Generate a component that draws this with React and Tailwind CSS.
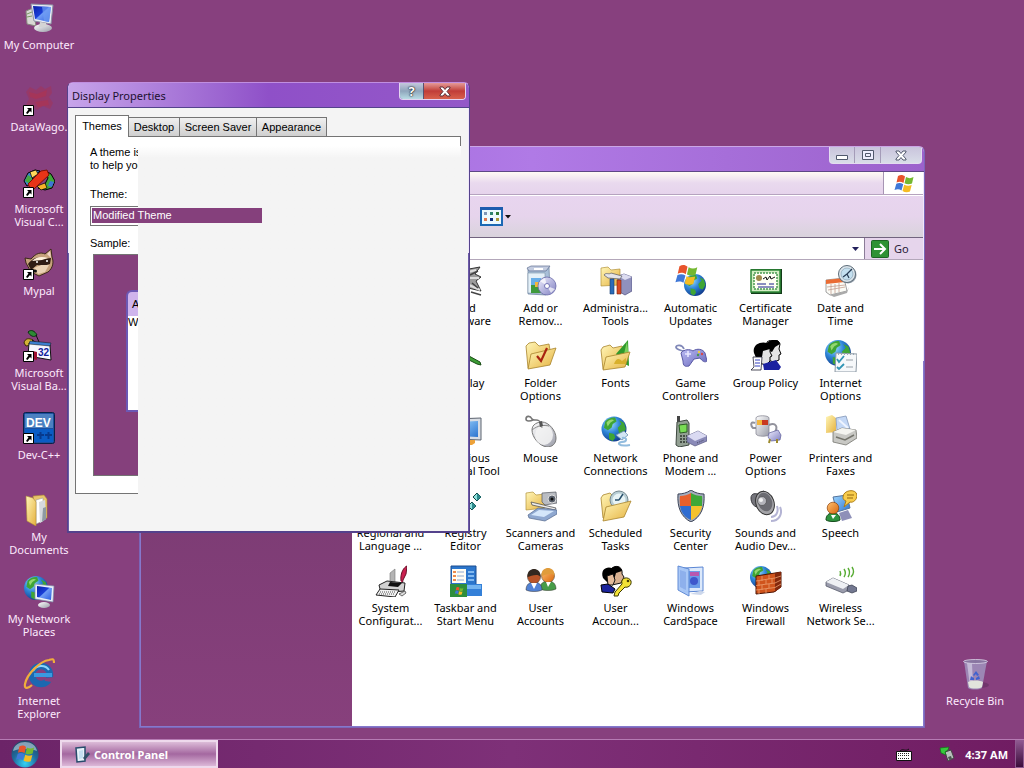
import React from 'react'

/* Shared paint for all the icons */
function IconDefs() {
  return (
    <svg width="0" height="0" className="absolute" aria-hidden="true">
      <defs>
        <radialGradient id="globe" cx="0.35" cy="0.3" r="0.8">
          <stop offset="0" stopColor="#9fe0ff" />
          <stop offset="0.45" stopColor="#2f86d8" />
          <stop offset="1" stopColor="#0b2f80" />
        </radialGradient>
        <linearGradient id="folder" x1="0" y1="0" x2="1" y2="1">
          <stop offset="0" stopColor="#fff6b8" />
          <stop offset="1" stopColor="#e5b13e" />
        </linearGradient>
        <linearGradient id="screen" x1="0" y1="0" x2="1" y2="1">
          <stop offset="0" stopColor="#0a1ea8" />
          <stop offset="0.45" stopColor="#1a3fd8" />
          <stop offset="0.5" stopColor="#6f9bf5" />
          <stop offset="1" stopColor="#2a5be0" />
        </linearGradient>
        <linearGradient id="metal" x1="0" y1="0" x2="1" y2="1">
          <stop offset="0" stopColor="#ffffff" />
          <stop offset="1" stopColor="#9a9ca8" />
        </linearGradient>
        <linearGradient id="lilac" x1="0" y1="0" x2="1" y2="1">
          <stop offset="0" stopColor="#f0efff" />
          <stop offset="1" stopColor="#7f7fc0" />
        </linearGradient>
        <linearGradient id="pad" x1="0" y1="0" x2="1" y2="1">
          <stop offset="0" stopColor="#bcbcf4" />
          <stop offset="1" stopColor="#6464b8" />
        </linearGradient>
        <linearGradient id="sky" x1="0" y1="0" x2="1" y2="1">
          <stop offset="0" stopColor="#9fd6ff" />
          <stop offset="1" stopColor="#2c74d0" />
        </linearGradient>
        <radialGradient id="orb" cx="0.5" cy="0.85" r="0.9">
          <stop offset="0" stopColor="#36d2f4" />
          <stop offset="0.5" stopColor="#1f6a9c" />
          <stop offset="1" stopColor="#23405e" />
        </radialGradient>
        <linearGradient id="orange" x1="0" y1="0" x2="1" y2="1">
          <stop offset="0" stopColor="#ffc070" />
          <stop offset="1" stopColor="#d8650c" />
        </linearGradient>
      </defs>
    </svg>
  )
}

function Svg({ children, className = 'w-8 h-8' }) {
  return (
    <svg viewBox="0 0 32 32" className={className} aria-hidden="true">
      {children}
    </svg>
  )
}

function Globe({ x, y, r }) {
  return (
    <g transform={`translate(${x} ${y}) scale(${r / 10})`}>
      <circle r="10" fill="url(#globe)" />
      <path d="M-7-6C-4-9-1-9.500 1-9L2-6-1-4-2-1-5 1-8-1ZM4-7L8-5 9.500 0 7 4 4 3 3-1 6-4ZM-4 3L0 4 1 7-1 9.500-4 8Z" fill="#3fa535" />
      <path d="M-6-5C-4-8-1-8 0-7L-3-5-5-2Z" fill="#b8ec8a" opacity="0.7" />
    </g>
  )
}

function Flag({ x, y, s }) {
  return (
    <g transform={`translate(${x} ${y}) scale(${s})`}>
      <path d="M3 1C6-0.500 8 0 10 1.500L8.500 8C6 6.500 4 6.500 1.500 7.500Z" fill="#e8542c" />
      <path d="M11 2C13.500 3.500 16 3.500 18.500 2L17 8.500C14.500 9.500 12 9.500 9.500 8.300Z" fill="#74b830" />
      <path d="M1.300 8.700C4 7.500 6 7.800 8.200 9.200L6.500 15.500C4.500 14 2 14-0.500 15Z" fill="#3f78d8" />
      <path d="M9.200 9.700C12 11 14 11 16.700 10L15 16.500C12.500 17.500 10 17.500 7.500 16Z" fill="#f5bc24" />
    </g>
  )
}

function Person({ x, y, hair, skin, body }) {
  return (
    <g transform={`translate(${x} ${y})`} stroke="#35302c" strokeWidth="0.5">
      <path d="M-8 16C-8 10-4 8 0 8S8 10 8 16C4 18-4 18-8 16Z" fill={body} />
      <circle cy="3" r="6.500" fill={skin} />
      <path d="M-6.500 3C-7-3-3-5 0-5S7-3 6.500 3C4-1-3 2-6.500 3Z" fill={hair} stroke="none" />
    </g>
  )
}

function Shortcut() {
  return (
    <g>
      <path d="M0.500 21.500h10v10h-10z" fill="#fff" stroke="#000" />
      <path d="M4 24h4.500v4.500L7 27 4.500 30 3 29 5.500 25.500Z" fill="#000" />
    </g>
  )
}

function BackFolder() {
  return <path d="M1 8L3 5 10 3 13 6 22 4 24 8V24L3 28Z" fill="url(#folder)" stroke="#a8842c" strokeWidth="0.8" />
}

function FrontFolder() {
  return <path d="M6 14L31 8 25 25 3 29Z" fill="url(#folder)" stroke="#a8842c" strokeWidth="0.8" />
}

/* Two heads in profile, in the 16-colour style */
function Profiles() {
  return (
    <g>
      <path d="M17 2C21-1 29-1 30 4L29 9 31 14 29 15V20L24 22 17 20Z" fill="#e4e4e4" stroke="#000" />
      <path d="M17 3C22-2 29-1 30 4L25 7 22 12 17 10Z" fill="#000" />
      <path d="M9 8L20 6 20 12 22 16 20 17V21L16 25 9 23Z" fill="#e4e4e4" stroke="#000" />
      <path d="M4 13C2 5 10 1 17 3 20 4 21 7 20 9L13 11 12 17 7 20Z" fill="#000" />
    </g>
  )
}

const ICONS = {
  computer: (
    <Svg>
      <path d="M3 9L10 6 13 24 4 22Z" fill="#d8d8d4" stroke="#85857c" />
      <path d="M4 12l5-2M4 15l5-1" stroke="#7b9a64" />
      <path d="M8 2L30 3 28 22 11 19Z" fill="#e9ecf4" stroke="#8b90a4" />
      <path d="M10 4L28 5 26 20 12 17Z" fill="url(#screen)" />
      <path d="M19 4.500L28 5 26 20 21 19Z" fill="#6f9df2" opacity="0.7" />
      <ellipse cx="20" cy="26" rx="9" ry="4" fill="url(#metal)" />
      <path d="M17 20l6 1v4h-7z" fill="#d4d4d4" />
    </Svg>
  ),
  dataWagon: (
    <Svg>
      <path d="M3 8L7 3 13 6 18 2 22 5 28 2 29 9 26 13 30 19 27 25 20 22 14 26 9 22 3 21 6 15Z" fill="#a0355c" opacity="0.6" />
      <path d="M6 8L14 10 24 6 23 12 13 15 7 13ZM12 18L25 16 26 21 15 23Z" fill="#b83048" opacity="0.45" />
      <Shortcut />
    </Svg>
  ),
  visualC: (
    <Svg>
      <path d="M1 15L5 7 12 4 17 5 10 11 8 18 4 20Z" fill="#3e86d0" stroke="#000" />
      <path d="M2 15L5 9 9 12 7 18Z" fill="#46a83e" />
      <path d="M7 6L13 4 15 8 9 12Z" fill="#ffd95c" stroke="#000" strokeWidth="0.7" />
      <path d="M23 5L28 8 32 15 29 22 22 24 15 22 22 18 25 12Z" fill="#43a83c" stroke="#000" />
      <path d="M14 20L22 17 24 22 18 24Z" fill="#f6b428" stroke="#000" strokeWidth="0.7" />
      <path d="M27 15l4 1-2 5-4-1z" fill="#3f76d8" />
      <path d="M5 18L18 5 24 4 26 9 11 23 7 22Z" fill="#e83418" stroke="#7b1204" />
      <Shortcut />
    </Svg>
  ),
  mypal: (
    <Svg>
      <path d="M3 15L2 10 8 11C13 5 18 4 22 6L28 1 29 9C31 14 30 20 25 24L16 28 8 24Z" fill="#c6a27c" stroke="#3c2818" />
      <path d="M24 6l3-3 1 7z" fill="#f2d6c8" />
      <path d="M5 16C11 9 15 9 20 11L28 10 27 16 20 18 14 17 8 22Z" fill="#2e1c14" />
      <path d="M9 13C13 9 18 8 25 10L19 12Z" fill="#fff1dc" />
      <path d="M11 20L18 17 26 17 22 24 15 26Z" fill="#ead2b4" />
      <circle cx="14" cy="14" r="1" fill="#fff" />
      <circle cx="24" cy="13" r="1" fill="#fff" />
      <ellipse cx="12" cy="23" rx="2" ry="1.500" fill="#111" />
      <Shortcut />
    </Svg>
  ),
  visualBasic: (
    <Svg>
      <path d="M5 2C8-1 12 1 14 5 11 8 7 6 5 2Z" fill="#2d8a34" stroke="#0b3010" />
      <path d="M1 13C2 8 6 8 10 10L9 15 3 16Z" fill="#d3b237" stroke="#3c2c00" />
      <path d="M13 5l3 7M9 10l5 3" stroke="#111" />
      <path d="M6 13L27 15 28 30 5 26Z" fill="#f7f7ff" stroke="#111" />
      <path d="M7 11L28 13 27 16 6 14Z" fill="#3c7fd0" stroke="#111" strokeWidth="0.5" />
      <path d="M10 21l4 1v8l-4-1z" fill="#a01030" />
      <text x="15" y="26" fontSize="10" fontWeight="bold" fontFamily="Liberation Sans, sans-serif" fill="#10209a">32</text>
      <Shortcut />
    </Svg>
  ),
  devCpp: (
    <Svg>
      <rect x="0.500" y="0.500" width="31" height="31" rx="2" fill="#1c4f9e" stroke="#0a2148" />
      <path d="M2 2h28v14H2z" fill="#5c92cc" opacity="0.75" />
      <path d="M2 17h28v13H2z" fill="#0a5cc4" />
      <path d="M14 23h7M17.500 20v7M22 23h7M25.500 20v7" stroke="#07398c" strokeWidth="2" />
      <text x="3" y="15" fontSize="12" fontWeight="bold" fontFamily="Liberation Sans, sans-serif" fill="#fff">DEV</text>
      <Shortcut />
    </Svg>
  ),
  documents: (
    <Svg>
      <path d="M10 2L21 1 24 5V24L14 28Z" fill="#e7c46c" stroke="#a98533" strokeWidth="0.6" />
      <path d="M13 6L20 4V27L13 30Z" fill="#fff" stroke="#a0a0a0" strokeWidth="0.6" />
      <path d="M16 8L22 6 23 25 17 29Z" fill="#d5d9de" />
      <path d="M20 14l3-1v12l-4 3z" fill="#8d9aa2" />
      <path d="M3 2L10 4 13 8V32L4 27Z" fill="url(#folder)" stroke="#b08e38" strokeWidth="0.6" />
    </Svg>
  ),
  networkPlaces: (
    <Svg>
      <Globe x="13" y="12" r="12" />
      <path d="M12 8L31 10 30 26 12 23Z" fill="#eaf0fa" stroke="#7e8ba4" strokeWidth="0.7" />
      <path d="M14 10L29 12 28 24 14 21Z" fill="url(#screen)" />
      <ellipse cx="21" cy="29" rx="6" ry="3" fill="url(#metal)" />
    </Svg>
  ),
  explorer: (
    <Svg>
      <circle cx="18" cy="17" r="9" fill="none" stroke="#1c68b0" strokeWidth="6.500" />
      <path d="M11 17H29" stroke="#3a9ae0" strokeWidth="4" />
      <path d="M21 20L32 19 29 24 22 23Z" fill="#87407e" />
      <path d="M10 13C13 7 22 6 26 12" stroke="#8cd6fa" strokeWidth="2" fill="none" />
      <path d="M31 5C31 0 29 1 26 2 17 3 4 16 2 26 1 32 6 30 9 27" fill="none" stroke="#f0ad3c" strokeWidth="2.200" />
    </Svg>
  ),
  recycle: (
    <Svg>
      <ellipse cx="21" cy="27" rx="9" ry="3" fill="#5c2a5a" opacity="0.5" />
      <path d="M5 3L28 3 23 30C20 32 12 32 9 30Z" fill="#a093bd" opacity="0.85" />
      <path d="M8 5L13 5 14 28 11 28Z" fill="#d4cfe4" opacity="0.7" />
      <path d="M9 24C14 22 20 22 24 24L23 29C20 31 12 31 10 29Z" fill="#e2e4dc" />
      <ellipse cx="16.500" cy="3.500" rx="12" ry="2" fill="#8875a0" stroke="#dcd4e8" strokeWidth="0.8" />
      <path d="M14 17l3-4 3 4-2 1-1-2-2 2zM20 18l1 3-4 1v-2zM12 18l-1 4h4v-2l-2-1z" fill="#3f62d0" />
    </Svg>
  ),
  hardware: (
    <Svg>
      <path d="M8 6L30 2 25 9 31 12 26 16 31 26 18 23 6 26 14 15Z" fill="#9c9c9c" stroke="#333" />
      <path d="M14 8l12-3M20 13h9M19 20l11 5" stroke="#ddd" strokeWidth="2" />
      <path d="M21 27l10 3M20 10l8-4M22 18l6 5" stroke="#444" strokeWidth="1.500" />
    </Svg>
  ),
  addRemove: (
    <Svg>
      <path d="M3 4L21 5 24 2 25 26 21 30 3 29Z" fill="#a9bfd8" stroke="#68809c" strokeWidth="0.7" />
      <path d="M3 8H20V29L3 28Z" fill="#e4f0f8" stroke="#7e93aa" strokeWidth="0.6" />
      <path d="M2 3L6 1 25 1 21 6 4 6Z" fill="#c3cce0" stroke="#5f6f90" strokeWidth="0.7" />
      <path d="M9 4h9" stroke="#fff" strokeWidth="2" />
      <path d="M6 13h10v8H6z" fill="#68aee8" />
      <path d="M6 20h10v8H6z" fill="#3f9a3c" />
      <path d="M10 17h6v5h-6z" fill="#f3b63c" />
      <circle cx="22" cy="21" r="9" fill="url(#lilac)" stroke="#6a6aa8" strokeWidth="0.8" />
      <path d="M22 21L15 16 20 13ZM22 21L30 24 26 28Z" fill="#fff" opacity="0.7" />
      <circle cx="22" cy="21" r="2.500" fill="#fff" stroke="#7373b8" />
    </Svg>
  ),
  admin: (
    <Svg>
      <path d="M1 3L8 2 11 5 20 4V20L1 21Z" fill="url(#folder)" stroke="#b1923a" strokeWidth="0.7" />
      <path d="M18 11L24 9 32 12V26L25 30 18 26Z" fill="#9091bc" stroke="#4d4d80" strokeWidth="0.7" />
      <path d="M18 11L24 9 32 12 25 15Z" fill="#dcdcf0" />
      <path d="M4 10C6 7 9 10 11 8L22 11 20 14 8 13Z" fill="#e4e4e8" stroke="#55555c" strokeWidth="0.7" />
      <path d="M10 14h4v15h-4z" fill="#2c6cb8" stroke="#153c74" strokeWidth="0.6" />
      <path d="M17 15h4v14h-4z" fill="#d84a24" stroke="#7c2008" strokeWidth="0.6" />
    </Svg>
  ),
  updates: (
    <Svg>
      <Globe x="20" y="20" r="11" />
      <Flag x="1" y="0" s="1.150" />
    </Svg>
  ),
  certificate: (
    <Svg>
      <path d="M1 4h31v25H1z" fill="#123c18" />
      <path d="M1 5h29v22H1z" fill="#d4efc4" stroke="#2f8a38" strokeWidth="1.500" />
      <path d="M4 8h23v16H4z" fill="#fffff4" stroke="#4a9a50" strokeWidth="1.500" strokeDasharray="2 1" />
      <circle cx="9" cy="13" r="3" fill="#a08a4c" />
      <path d="M13 14l3-2 1 3 3-4 1 3 4-2" stroke="#111" fill="none" />
      <path d="M7 19h9M8 22h16M19 19h5" stroke="#18218a" />
    </Svg>
  ),
  dateTime: (
    <Svg>
      <path d="M1 15L19 13 22 26 5 30 1 27Z" fill="#fbfbf6" stroke="#888" strokeWidth="0.8" />
      <path d="M1 15L19 13 20 17 1 19Z" fill="#ea6c34" />
      <path d="M2 22l18-2M3 25l17-3M6 19v10M10 19v9M14 18v9" stroke="#c4a090" strokeWidth="0.8" />
      <path d="M5 30L22 26 24 22 22 28 9 32Z" fill="#aaa" />
      <circle cx="23" cy="10" r="8.500" fill="#8e9aa6" />
      <circle cx="22" cy="9" r="8.500" fill="#dbe5ec" stroke="#5d6c78" />
      <circle cx="22" cy="9" r="6" fill="#c4e0f0" stroke="#829cac" strokeWidth="0.6" />
      <path d="M18 12L22 9 27 4M22 9l2 4" stroke="#283c54" strokeWidth="1.200" fill="none" />
    </Svg>
  ),
  display: (
    <Svg>
      <path d="M2 3h16v17H2z" fill="url(#sky)" stroke="#445" />
      <path d="M19 16L30 22 31 25 27 24 19 20Z" fill="#3c9c34" stroke="#184c14" />
    </Svg>
  ),
  folderOptions: (
    <Svg>
      <path d="M1 6L4 3 10 2 14 6 24 4 25 10V24L3 28Z" fill="url(#folder)" stroke="#a8842c" strokeWidth="0.8" />
      <FrontFolder />
      <path d="M12 16L16 21 22 8" fill="none" stroke="#a82410" strokeWidth="2.200" />
    </Svg>
  ),
  fonts: (
    <Svg>
      <path d="M1 10L3 7 10 5 13 8 22 6 24 10V25L3 29Z" fill="url(#folder)" stroke="#a8842c" strokeWidth="0.8" />
      <path d="M28 0L16 14 20 22 29 26Z" fill="#2f9a2c" />
      <path d="M27 1L29 20 24 14Z" fill="#7cd05c" />
      <path d="M6 17L30 12 25 27 3 30Z" fill="url(#folder)" stroke="#a8842c" strokeWidth="0.8" />
      <path d="M14 24C16 18 19 18 22 21L26 18V24Z" fill="#d8b02c" />
    </Svg>
  ),
  game: (
    <Svg>
      <path d="M10 11C6 11 1 9 1 7S7 4 9 9" fill="none" stroke="#8088b8" strokeWidth="1.800" />
      <path d="M6 13C9 9 15 9 18 11 22 8 28 9 30 13L32 21C30 23 27 21 25 18L19 19 14 26C10 27 8 26 8 21Z" fill="url(#pad)" stroke="#5858a4" />
      <path d="M10 14h6M13 11v6" stroke="#e8e8ff" strokeWidth="1.600" />
      <circle cx="24" cy="12" r="1.200" fill="#f2ca40" />
      <circle cx="27" cy="14" r="1.200" fill="#d84848" />
      <circle cx="23" cy="15" r="1.200" fill="#4a9a50" />
    </Svg>
  ),
  policy: (
    <Svg>
      <Profiles />
      <path d="M13 24L26 20 31 27 29 30 14 30Z" fill="#1c22a0" />
      <path d="M3 17H12L11 30H1L4 27Z" fill="#fff" stroke="#223" strokeWidth="0.8" />
      <path d="M5 20h5M5 23h5M5 26h5" stroke="#3440c0" />
    </Svg>
  ),
  internet: (
    <Svg>
      <Globe x="13" y="13" r="13" />
      <path d="M11 13L32 14 31 32H10Z" fill="#f6f8fa" stroke="#8d99a4" />
      <path d="M12 19l2 3 5-6M12 27l2 2 5-5" fill="none" stroke="#2f94b4" strokeWidth="1.800" />
      <path d="M21 20h7M21 27h7" stroke="#97a0a8" />
      <path d="M13 14h17" stroke="#9aa7b4" strokeDasharray="1 2" strokeWidth="2" />
    </Svg>
  ),
  removal: (
    <Svg>
      <path d="M5 4L31 3V25L6 24Z" fill="#d9dde4" stroke="#5d6470" />
      <path d="M8 7L28 6V22L8 21Z" fill="url(#sky)" />
      <path d="M17 25h8v3l-3 2h-7z" fill="#eda23a" />
    </Svg>
  ),
  mouse: (
    <Svg>
      <path d="M16 9C14 2 9 7 7 4 5 0 1 1 1 4S6 6 8 5" fill="none" stroke="#777" strokeWidth="1.600" />
      <path d="M7 15C7 9 13 7 17 7 24 7 31 16 31 23 31 29 27 32 22 32 14 31 7 22 7 15Z" fill="url(#metal)" stroke="#777" />
      <ellipse cx="19" cy="20" rx="9" ry="10" fill="#f5f5f5" opacity="0.85" />
      <path d="M7 15C13 10 19 10 24 11M16 8l1 5" fill="none" stroke="#888" />
      <path d="M14 7l3-1 1 5-3 1z" fill="#555" />
    </Svg>
  ),
  network: (
    <Svg>
      <Globe x="14" y="14" r="12.500" />
      <path d="M16 20L24 16 28 20 22 25Z" fill="#d3e5f4" stroke="#6b8db0" strokeWidth="0.8" />
      <path d="M22 23C28 22 27 27 22 27S17 32 30 30" fill="none" stroke="#92bcde" strokeWidth="2" />
    </Svg>
  ),
  phone: (
    <Svg>
      <path d="M2 1h3v8H2z" fill="#444" />
      <path d="M2 7L12 5 14 8V30L4 32 1 30Z" fill="#93a093" stroke="#3e4840" />
      <path d="M4 10L12 9V17L5 18Z" fill="#79dc54" stroke="#2c5c24" />
      <path d="M5 21h7M5 24h7M5 27h7" stroke="#2c342c" strokeWidth="1.500" strokeDasharray="2 1" />
      <path d="M12 21L23 16 32 21V26L20 31 12 27Z" fill="#8a8ab8" stroke="#54547c" strokeWidth="0.7" />
      <path d="M12 21L23 16 32 21 20 26Z" fill="#dadaf2" />
      <path d="M22 28l7-3" stroke="#42425c" strokeDasharray="1 1" />
    </Svg>
  ),
  power: (
    <Svg>
      <path d="M7 13H3C0 10 1 6 5 8M19 10C26 7 28 12 25 17" fill="none" stroke="#92929c" strokeWidth="2" />
      <path d="M6 3C6 0 19 0 19 3V19C19 22 7 22 6 19Z" fill="url(#metal)" stroke="#80808c" strokeWidth="0.7" />
      <path d="M7 5h11v5H7z" fill="#f3b63c" />
      <path d="M12 5h6v5h-6z" fill="#c83820" />
      <path d="M19 18L28 15 31 20 30 25 21 26 18 22Z" fill="url(#lilac)" stroke="#5c5c98" strokeWidth="0.7" />
      <path d="M20 24l-1 4M27 24v4" stroke="#9c8a2c" strokeWidth="2" />
    </Svg>
  ),
  printer: (
    <Svg>
      <path d="M1 2L7 0 11 3V17L1 18Z" fill="url(#folder)" />
      <path d="M11 3L21 1 25 14 12 16Z" fill="#c4d8f6" stroke="#8296b8" strokeWidth="0.8" />
      <path d="M14 5l9 8" stroke="#eef4ff" strokeWidth="2" />
      <path d="M8 17L17 13 31 15 32 23 21 30 8 27Z" fill="#c8c8c4" stroke="#75756f" strokeWidth="0.8" />
      <path d="M8 17L17 13 31 15 21 20Z" fill="#f4f4f0" />
      <path d="M11 22l9 3 9-5" fill="none" stroke="#74746c" strokeWidth="1.500" />
    </Svg>
  ),
  registry: (
    <Svg>
      <path d="M2 8l6-4 6 4-6 4zM8 16l6-4 6 4-6 4zM2 24l6-4 6 4-6 4z" fill="#7ed0d0" stroke="#124" />
      <path d="M23 7l4-4 4 4-4 4zM18 16l4-4 4 4-4 4z" fill="#8ee0dc" stroke="#0e4444" />
      <path d="M27 3l4 4-4 4zM22 12l4 4-4 4z" fill="#2c8a8c" />
    </Svg>
  ),
  scanner: (
    <Svg>
      <path d="M1 3L8 2 11 5 20 4V18L1 20Z" fill="url(#folder)" stroke="#b1923a" strokeWidth="0.7" />
      <path d="M17 3L31 2 32 13 20 15 17 12Z" fill="#b9bcc2" stroke="#55585f" strokeWidth="0.7" />
      <circle cx="27" cy="9" r="4" fill="#59606c" stroke="#ddd" />
      <circle cx="27" cy="9" r="1.500" fill="#111" />
      <path d="M6 12L31 18 30 20 7 15Z" fill="#ececec" stroke="#444" strokeWidth="0.7" />
      <path d="M3 25L13 18 32 20V24L20 31 4 28Z" fill="#8fa8d0" stroke="#54688c" strokeWidth="0.7" />
      <path d="M6 25L14 20 29 21 19 27Z" fill="#d4e6fa" />
    </Svg>
  ),
  scheduled: (
    <Svg>
      <BackFolder />
      <circle cx="19" cy="10" r="9" fill="#b7cdd4" stroke="#74888e" />
      <circle cx="19" cy="10" r="6.500" fill="#e8f4f6" />
      <path d="M19 10l4-6M19 10h-4" stroke="#28506c" strokeWidth="1.500" />
      <path d="M6 17L31 11 24 27 3 31Z" fill="url(#folder)" stroke="#a8842c" strokeWidth="0.8" />
    </Svg>
  ),
  security: (
    <Svg>
      <path d="M16 0C20 3 25 4 29 4 30 17 26 27 16 32 6 27 2 17 3 4 7 4 12 3 16 0Z" fill="#a4acbc" stroke="#3c4458" />
      <path d="M16 3V16H5C5 12 4.500 9 5 6 9 6 13 5 16 3Z" fill="#e8602c" />
      <path d="M16 3V16H27C27 12 27.500 9 27 6 23 6 19 5 16 3Z" fill="#3fa838" />
      <path d="M5 16H16V30C9 27 6 22 5 16Z" fill="#2f6cd0" />
      <path d="M27 16H16V30C23 27 26 22 27 16Z" fill="#f5c22c" />
    </Svg>
  ),
  sound: (
    <Svg>
      <path d="M21 27C26 27 29 22 27 16M21 31C29 31 33 24 30 17" fill="none" stroke="#b4b4d4" strokeWidth="2" />
      <path d="M1 8C1 4 4 3 8 4L14 1 22 22 16 24 10 17C4 18 1 13 1 8Z" fill="#75757c" stroke="#36363c" />
      <ellipse cx="15" cy="13" rx="9" ry="12" transform="rotate(-20 15 13)" fill="#a4a4a8" stroke="#333" />
      <ellipse cx="15" cy="12" rx="7" ry="9.500" transform="rotate(-20 15 12)" fill="#6c6c72" />
      <circle cx="12" cy="11" r="4.500" fill="#b4b4ba" stroke="#444" strokeWidth="0.6" />
      <circle cx="11" cy="10" r="2" fill="#f2f2f2" />
    </Svg>
  ),
  speech: (
    <Svg>
      <path d="M8 7L22 5 25 18 12 22Z" fill="url(#sky)" stroke="#54749c" />
      <path d="M14 23L23 20 27 28 17 31Z" fill="#8e90b8" />
      <path d="M18 7C18 0 31-2 32 5 32 10 28 13 25 12L19 17 21 11C18 10 18 8 18 7Z" fill="#f8cc4c" stroke="#ac7c14" />
      <path d="M22 5h7M22 8h6" stroke="#94680c" />
      <path d="M1 30C1 25 4 23 8 23S15 25 15 30C12 32 4 32 1 30Z" fill="#2f9440" stroke="#164c1c" />
      <circle cx="8" cy="18" r="5.800" fill="url(#orange)" stroke="#8e4008" strokeWidth="0.7" />
      <path d="M6 25l2 4 3-4z" fill="#fff" />
    </Svg>
  ),
  system: (
    <Svg>
      <path d="M15 18V8L20 4V17Z" fill="#b4b4b4" stroke="#777" strokeWidth="0.6" />
      <path d="M26 16C25 8 29 2 32 1L31 9 28 15 27 21" fill="#cc2050" stroke="#681028" />
      <path d="M4 20L12 16 30 18 29 26 6 28Z" fill="#d2d2d2" stroke="#222" />
      <path d="M15 17L27 18 23 22 13 21Z" fill="#111" />
      <path d="M1 30L5 24 24 25 20 32Z" fill="#f2f2f2" stroke="#222" />
      <path d="M5 27h15M4 29h15" stroke="#555" strokeDasharray="1 1" />
      <path d="M24 29l6-3 1 2-4 3z" fill="#ddd" stroke="#333" strokeWidth="0.7" />
    </Svg>
  ),
  taskbar: (
    <Svg>
      <path d="M1 1h25v20H1z" fill="#2c76cc" stroke="#1b4c90" />
      <path d="M2 4h14v14H2z" fill="#fffdf4" />
      <path d="M3 7h3M3 11h3M3 15h3" stroke="#ed8a4c" strokeWidth="2" />
      <path d="M7 7h7M7 11h7M7 15h7" stroke="#8ea8d0" />
      <path d="M18 7h6M18 11h6M18 15h6" stroke="#9ed0fc" strokeWidth="1.500" />
      <path d="M15 19H32V31H15Z" fill="#3480d8" />
      <path d="M16 20H31V24H16Z" fill="#74b4f0" />
      <path d="M0 19H17V32H0Z" fill="#2f8e3c" />
      <Flag x="5" y="22" s="0.450" />
    </Svg>
  ),
  users: (
    <Svg>
      <Person x="23" y="8" hair="#e09c3c" skin="url(#orange)" body="#469c48" />
      <Person x="9" y="9" hair="#332820" skin="#b85428" body="#5282d4" />
      <path d="M6 18l3 6 3-6zM21 17l2 5 3-5z" fill="#fff" />
    </Svg>
  ),
  userKey: (
    <Svg>
      <path d="M12 3C18-1 23 3 22 9L24 12 21 18 12 20Z" fill="#d8b090" stroke="#111" />
      <path d="M3 13C0 4 7 1 12 3 15 0 21 1 22 6L16 8 14 15 8 18Z" fill="#000" />
      <path d="M7 11L13 9 15 15 13 20 8 20Z" fill="#e4bc9c" stroke="#111" />
      <path d="M1 20L8 19 15 24 13 28 2 27Z" fill="#1c249c" stroke="#000" />
      <path d="M22 19C20 12 29 11 31 16 32 21 27 23 25 22L19 28 18 31H14L15 27Z" fill="#f3e236" stroke="#3c3800" />
      <circle cx="28" cy="16" r="1.300" fill="#443c00" />
    </Svg>
  ),
  cardSpace: (
    <Svg>
      <path d="M9 3L28 2V26L9 27Z" fill="#dce9fb" stroke="#5a86d4" />
      <path d="M13 6h12v17H13z" fill="#6c9ce8" />
      <path d="M15 7h9v4h-9z" fill="#b858b0" />
      <circle cx="19" cy="16" r="4" fill="#3f58cc" />
      <path d="M3 1L14 4V31L3 25Z" fill="#a6c6f6" stroke="#5a86d4" opacity="0.95" />
      <path d="M5 5l6 2v18l-6-3z" fill="#8eb0ec" />
      <path d="M15 29l11 1 4-3-5-1z" fill="#cdd8ec" />
    </Svg>
  ),
  firewall: (
    <Svg>
      <Globe x="11" y="12" r="11" />
      <path d="M6 11L25 8 31 7V22L24 27 6 29Z" fill="#d0541c" stroke="#4c1404" />
      <path d="M25 8L31 7V22L25 27Z" fill="#84280c" />
      <path d="M6 16L25 13 31 11M6 20.500L25 18 31 15M6 25L25 22.500 31 19M12 11v5M19 10v4M9 16v5M16 15v4M22 14v4M12 20v5M19 19v4M9 25v4M16 24v4" stroke="#eca070" strokeWidth="0.8" fill="none" />
    </Svg>
  ),
  wireless: (
    <Svg>
      <path d="M15 11C16 9 16 8 15 6M19 12C21 9 21 7 19 4M23 12C25 9 25 6 23 3M26 12C29 9 29 5 27 2" fill="none" stroke="#58ac34" strokeWidth="1.400" />
      <path d="M1 17L8 13 24 20V25L18 28 1 21Z" fill="#9a9cac" stroke="#585c6c" strokeWidth="0.8" />
      <path d="M1 17L8 13 24 20 18 24Z" fill="#eef0f4" />
      <path d="M23 21L27 20 32 23V26L27 28 22 26Z" fill="#737890" stroke="#343848" strokeWidth="0.7" />
    </Svg>
  ),
}

const DESKTOP_ITEMS = [
  { icon: 'computer', lines: ['My Computer'] },
  { icon: 'dataWagon', lines: ['DataWago.'] },
  { icon: 'visualC', lines: ['Microsoft', 'Visual C...'] },
  { icon: 'mypal', lines: ['Mypal'] },
  { icon: 'visualBasic', lines: ['Microsoft', 'Visual Ba...'] },
  { icon: 'devCpp', lines: ['Dev-C++'] },
  { icon: 'documents', lines: ['My', 'Documents'] },
  { icon: 'networkPlaces', lines: ['My Network', 'Places'] },
  { icon: 'explorer', lines: ['Internet', 'Explorer'] },
]

const PANEL_ITEMS = [
  { icon: 'hardware', lines: ['Add', 'Hardware'], start: true },
  { icon: 'addRemove', lines: ['Add or', 'Remov...'] },
  { icon: 'admin', lines: ['Administra...', 'Tools'] },
  { icon: 'updates', lines: ['Automatic', 'Updates'] },
  { icon: 'certificate', lines: ['Certificate', 'Manager'] },
  { icon: 'dateTime', lines: ['Date and', 'Time'] },
  { icon: 'display', lines: ['Display'], start: true },
  { icon: 'folderOptions', lines: ['Folder', 'Options'] },
  { icon: 'fonts', lines: ['Fonts'] },
  { icon: 'game', lines: ['Game', 'Controllers'] },
  { icon: 'policy', lines: ['Group Policy'] },
  { icon: 'internet', lines: ['Internet', 'Options'] },
  { icon: 'removal', lines: ['Malicious', 'Removal Tool'], start: true },
  { icon: 'mouse', lines: ['Mouse'] },
  { icon: 'network', lines: ['Network', 'Connections'] },
  { icon: 'phone', lines: ['Phone and', 'Modem ...'] },
  { icon: 'power', lines: ['Power', 'Options'] },
  { icon: 'printer', lines: ['Printers and', 'Faxes'] },
  { icon: null, lines: ['Regional and', 'Language ...'] },
  { icon: 'registry', lines: ['Registry', 'Editor'] },
  { icon: 'scanner', lines: ['Scanners and', 'Cameras'] },
  { icon: 'scheduled', lines: ['Scheduled', 'Tasks'] },
  { icon: 'security', lines: ['Security', 'Center'] },
  { icon: 'sound', lines: ['Sounds and', 'Audio Dev...'] },
  { icon: 'speech', lines: ['Speech'] },
  { icon: 'system', lines: ['System', 'Configurat...'] },
  { icon: 'taskbar', lines: ['Taskbar and', 'Start Menu'] },
  { icon: 'users', lines: ['User', 'Accounts'] },
  { icon: 'userKey', lines: ['User', 'Accoun...'] },
  { icon: 'cardSpace', lines: ['Windows', 'CardSpace'] },
  { icon: 'firewall', lines: ['Windows', 'Firewall'] },
  { icon: 'wireless', lines: ['Wireless', 'Network Se...'] },
]

function IconItem({ item, className }) {
  return (
    <button type="button" className={`flex flex-col items-center gap-1 text-[11px] leading-[13px] whitespace-nowrap ${className}`}>
      <span className="block w-8 h-8">{item.icon && ICONS[item.icon]}</span>
      <span className="flex flex-col items-center">
        {item.lines.map(line => <span key={line}>{line}</span>)}
      </span>
    </button>
  )
}

function ControlPanelWindow() {
  return (
    <section
      aria-label="Control Panel"
      className="absolute left-[139px] top-[146px] w-[786px] h-[582px] flex flex-col rounded-t-md border border-[#7a66b8] border-t-[#cba6e6] px-px pb-px bg-[linear-gradient(#f0e6fa_0_214px,#8678cc_214px)] overflow-hidden"
    >
      <header className="flex justify-end items-start h-[25px] shrink-0 pr-[2px] -mx-px border-b border-[#5e4785] bg-linear-to-r from-[#9a5fd8] via-[#b07ae6] to-[#9c62cc]">
        <div className="flex h-[17px] rounded-b border border-t-0 border-[#e4dcf0] bg-linear-to-b from-[#c9c4dc] to-[#d9dde8] text-[#50586c]">
          <button type="button" aria-label="Minimize" className="w-[25px] flex items-center justify-center border-r border-[#a49cb8]">
            <svg width="14" height="12" aria-hidden="true"><path d="M1.500 6.500h11v4h-11z" fill="#fff" stroke="currentColor" /></svg>
          </button>
          <button type="button" aria-label="Maximize" className="w-[26px] flex items-center justify-center border-r border-[#a49cb8]">
            <svg width="12" height="11" aria-hidden="true"><path d="M0.500 0.500h11v9h-11zM3.500 3.500h5v3h-5z" fill="#eef" stroke="currentColor" /></svg>
          </button>
          <button type="button" aria-label="Close" className="w-[40px] flex items-center justify-center">
            <svg width="12" height="11" aria-hidden="true"><path d="M1 1H4L6 3.500 8 1H11V2L8 5.500 11 9V10H8L6 7.500 4 10H1V9L4 5.500 1 2Z" fill="#fff" stroke="currentColor" /></svg>
          </button>
        </div>
      </header>

      <div className="flex h-[23px] shrink-0 border-b border-[#b5a3be]">
        <div className="flex-1 bg-linear-to-b from-[#fffaf4] via-[#e9d9ee] to-[#e6d4ec]" />
        <div className="w-[40px] flex items-center justify-center bg-white border-l border-[#a795b4]">
          <svg width="20" height="19" viewBox="0 0 20 19" aria-label="Windows"><Flag x="1" y="1" s="1" /></svg>
        </div>
      </div>

      <div className="flex items-center h-[43px] shrink-0 pl-[339px] border-t border-white border-b border-b-[#72647f] bg-linear-to-b from-[#e8d5ef] via-[#e6d4ec] to-[#d9d3dc]">
        <button type="button" aria-label="Views" className="flex items-center gap-[2px]">
          <svg width="23" height="19" aria-hidden="true">
            <path d="M1 1h21v17H1z" fill="#eefaff" stroke="#1b68b4" strokeWidth="2" />
            <path d="M0 0h23v3H0z" fill="#1b5cae" />
            <path d="M4 5h3v3H4z" fill="#8098b8" /><path d="M10 5h3v3h-3z" fill="#2f8470" /><path d="M16 5h3v3h-3z" fill="#2f7a38" />
            <path d="M4 11h3v3H4z" fill="#e07850" /><path d="M10 11h3v3h-3z" fill="#103080" /><path d="M16 11h3v3h-3z" fill="#b09838" />
          </svg>
          <svg width="6" height="4" aria-hidden="true"><path d="M0 0h6L3 3.500Z" fill="#111" /></svg>
        </button>
      </div>

      <div className="flex h-[22px] shrink-0 border-b border-[#b3a7ba] bg-[#e6d5ec]">
        <div className="flex-1 flex items-center justify-end bg-white border-r border-[#8b7c98] pr-[5px]">
          <button type="button" aria-label="Address list">
            <svg width="7" height="4" aria-hidden="true"><path d="M0 0h7L3.500 4Z" fill="#23205c" /></svg>
          </button>
        </div>
        <button type="button" className="w-[58px] flex items-center gap-[5px] pl-[6px] text-[11px] leading-[13px] text-[#282038]">
          <svg width="18" height="18" aria-hidden="true">
            <rect x="0.500" y="0.500" width="17" height="17" rx="1" fill="#2e9234" stroke="#1d6424" />
            <path d="M3 9h11M9 4l5 5-5 5" fill="none" stroke="#fff" strokeWidth="2" />
          </svg>
          Go
        </button>
      </div>

      <div className="flex flex-1 min-h-0">
        <aside className="w-[211px] shrink-0 bg-linear-to-b from-[#76386e] via-[#7c3c74] to-[#87407c]" />
        <div className="flex-1 bg-white text-black pt-[5px] pl-px">
          <div className="grid grid-cols-[repeat(7,75px)] auto-rows-[75px]">
            {PANEL_ITEMS.map(item => (
              <IconItem key={item.lines.join(' ')} item={item} className={item.start ? 'col-start-2' : ''} />
            ))}
          </div>
        </div>
      </div>
    </section>
  )
}

const TABS = [
  { name: 'Desktop', width: 'w-[51px]' },
  { name: 'Screen Saver', width: 'w-[77px]' },
  { name: 'Appearance', width: 'w-[70px]' },
]

function DisplayProperties() {
  return (
    <section
      aria-label="Display Properties"
      className="absolute left-[67px] top-[82px] w-[403px] h-[451px] flex flex-col rounded-t-md border border-b-2 border-[#54428c] border-t-[#c08ee0] px-px bg-[linear-gradient(#f0e6fa_0_170px,#6c5aa8_170px)] overflow-hidden text-black"
    >
      <header className="flex justify-between items-start h-[25px] shrink-0 -mx-px pl-1 border-b border-[#54428c] bg-linear-to-r from-[#c7a4ea] via-[#8f50c8] to-[#9458c8]">
        <h1 className="pt-[5px] text-[11px] leading-[16px] text-[#1c1030]">Display Properties</h1>
        <div className="flex h-[17px] mr-[3px] rounded-b border border-t-0 border-[#e4d4f0] overflow-hidden">
          <button type="button" aria-label="Help" className="w-6 flex items-center justify-center border-r border-[#5a5070] bg-linear-to-b from-[#c4c8dc] via-[#8fa6bc] to-[#b8dce4] font-bold text-[13px] leading-[16px] text-white [text-shadow:0_0_1px_#000,0_0_2px_#000]">
            ?
          </button>
          <button type="button" aria-label="Close" className="w-[41px] flex items-center justify-center bg-linear-to-b from-[#e49a98] via-[#c03c38] to-[#d8604c]">
            <svg width="12" height="11" aria-hidden="true"><path d="M1 1H4L6 3.500 8 1H11V2L8 5.500 11 9V10H8L6 7.500 4 10H1V9L4 5.500 1 2Z" fill="#fff" stroke="#5c3038" /></svg>
          </button>
        </div>
      </header>

      <div className="flex-1 bg-[#f4f4f4] pl-[6px] pr-[7px] pt-[7px] font-['Liberation_Sans',Arial,sans-serif] text-[11px] leading-[13px]">
        <div role="tablist" className="flex items-end h-[21px]">
          <button type="button" role="tab" aria-selected="true" className="relative z-10 h-[22px] -mb-px w-[54px] border border-b-0 border-[#747474] bg-white">Themes</button>
          {TABS.map(tab => (
            <button key={tab.name} type="button" role="tab" aria-selected="false" className={`h-[19px] border border-l-0 border-b-0 border-[#747474] bg-linear-to-b from-[#f0f0f0] to-[#cfcfcf] ${tab.width}`}>
              {tab.name}
            </button>
          ))}
        </div>

        <div role="tabpanel" className="relative h-[358px] border border-[#747474] bg-white pl-[14px] pt-[9px]">
          {/* blank pane that hides the right part of the page */}
          <div className="absolute z-10 left-[62px] -right-px top-[9px] -bottom-px bg-linear-to-b from-white via-[#f4f4f4] via-[12px] to-[#f4f4f4]" />

          <p>A theme is<br />to help you</p>
          <label htmlFor="theme" className="block mt-4">Theme:</label>
          <div className="mt-[5px] h-[20px] border border-[#747474] bg-white p-px">
            <select id="theme" className="relative z-20 block appearance-none w-[170px] h-[15px] bg-[#85407c] text-white leading-[15px] pl-px">
              <option>Modified Theme</option>
            </select>
          </div>
          <p className="mt-[11px]">Sample:</p>
          <div className="mt-1 ml-[3px] w-[60px] h-[222px] border border-[#747474] bg-[#85407c] pt-[35px] pl-[32px]">
            <div className="h-[122px] rounded-tl-md border-2 border-r-0 border-[#6c58b4] bg-[#cfb4ec]">
              <div className="h-[24px] pl-[4px] pt-[6px]">A</div>
              <div className="h-[94px] bg-white">W</div>
            </div>
          </div>
        </div>
      </div>
    </section>
  )
}

function Taskbar() {
  return (
    <footer className="flex items-stretch h-[29px] shrink-0 border-t border-[#b67bb4] bg-linear-to-r from-[#6c2468] via-[#7e3078] to-[#701c62] text-white font-bold text-[11px] leading-[13px]">
      <button type="button" aria-label="Start" className="w-[60px] pl-[11px] flex items-center">
        <svg width="28" height="28" viewBox="0 0 28 28" aria-hidden="true">
          <circle cx="14" cy="14" r="13.500" fill="url(#orb)" />
          <path d="M2 11C4-1 24-1 26 11 18 8 10 8 2 11Z" fill="#d7e6ee" opacity="0.55" />
          <Flag x="5.500" y="5.500" s="0.950" />
        </svg>
      </button>
      <button type="button" className="flex items-center gap-[3px] w-[158px] pl-[12px] border-2 border-[#eed9ec] bg-linear-to-b from-[#dcbcd8] via-[#a468a0] to-[#dcb8d8]">
        <svg width="17" height="17" aria-hidden="true">
          <path d="M2 2L11 1V15L3 16Z" fill="#e6f2fa" stroke="#284c6c" strokeWidth="1.500" />
          <path d="M5 5L9 4V12L5 13Z" fill="#c4e0f2" />
          <path d="M9 12L14 6 16 8 11 14Z" fill="#2f5068" />
        </svg>
        Control Panel
      </button>
      <div className="ml-auto flex items-center">
        <svg width="16" height="13" className="mr-[27px]" aria-label="Keyboard">
          <path d="M4 3C7 0 9 4 13 1" fill="none" stroke="#111" />
          <path d="M0.500 3.500h15v9h-15z" fill="#fff" stroke="#111" />
          <path d="M2 5.500h12M2 7.500h12M2 10.500h12" stroke="#222" strokeDasharray="1 1" />
        </svg>
        <svg width="16" height="16" className="mr-[10px]" aria-label="Safely remove hardware">
          <path d="M6 6L12 4 15 12 9 15Z" fill="#b8c0bc" stroke="#444" />
          <path d="M9 11l3-1 1 3-3 1z" fill="#4c5850" />
          <path d="M1 2L10 1 9 4 6 6 7 9 2 7Z" fill="#37c83c" stroke="#127018" strokeWidth="0.700" />
        </svg>
        <time className="mr-[7px]">4:37 AM</time>
        <button type="button" aria-label="Show desktop" className="self-stretch w-[9px] border border-[#8f5a90] bg-linear-to-b from-[#8e5890] to-[#3c0c3c]" />
      </div>
    </footer>
  )
}

export default function App() {
  return (
    <div className="flex flex-col h-screen overflow-hidden bg-[#87407e] font-['Noto_Sans','Open_Sans',sans-serif]">
      <IconDefs />
      <main className="relative flex-1 min-h-0">
        <nav aria-label="Desktop" className="flex flex-col w-[78px] pt-[2px] text-[#fdeafd]">
          {DESKTOP_ITEMS.map(item => (
            <IconItem key={item.icon} item={item} className="h-[82px]" />
          ))}
        </nav>
        <IconItem item={{ icon: 'recycle', lines: ['Recycle Bin'] }} className="absolute right-[20px] bottom-[32px] text-[#fdeafd]" />
        <ControlPanelWindow />
        <DisplayProperties />
      </main>
      <Taskbar />
    </div>
  )
}
